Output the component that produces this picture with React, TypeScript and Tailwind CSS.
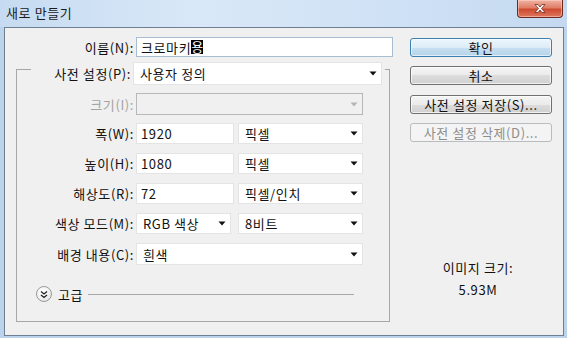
import React from "react";

function Arrow({ disabled }: { disabled?: boolean }) {
  return (
    <svg width="8" height="5" viewBox="0 0 8 5" className="shrink-0">
      <path d="M0.5 0.5H7.5L4 4.5Z" fill={disabled ? "#b4b4b4" : "#111"} />
    </svg>
  );
}

function Combo({
  text,
  w,
  h = "h-[21px]",
  disabled,
}: {
  text?: string;
  w: string;
  h?: string;
  disabled?: boolean;
}) {
  return (
    <div
      className={`${w} ${h} flex items-center justify-between pl-[6px] pr-[4px] ${
        disabled ? "bg-[#f0f0f0] border border-[#b8b8b8]" : "bg-white border border-[#e4e4e4]"
      }`}
    >
      <span className="leading-none">{text}</span>
      <Arrow disabled={disabled} />
    </div>
  );
}

function Input({ text, w }: { text: string; w: string }) {
  return (
    <div className={`${w} h-[21px] flex items-center pl-[4px] bg-white border border-[#e4e4e4]`}>
      <span className="leading-none">{text}</span>
    </div>
  );
}

function Label({ text, w = "w-[119px]", disabled }: { text: string; w?: string; disabled?: boolean }) {
  return (
    <div className={`${w} pr-[2px] flex justify-end items-center ${disabled ? "text-[#a3a3a3]" : ""}`}>
      <span className="leading-none whitespace-nowrap">{text}</span>
    </div>
  );
}

function Btn({
  text,
  kind,
  mt,
}: {
  text: string;
  kind?: "default" | "disabled";
  mt: string;
}) {
  const base = "ml-[17px] w-[142px] h-[19px] rounded-[3px] border flex items-center justify-center";
  const style =
    kind === "default"
      ? "border-[#3c7fb1] bg-[linear-gradient(to_bottom,#edf6fc_0%,#dcecf7_50%,#c8e0f2_50%,#b4d3ea_100%)] shadow-[inset_0_0_0_1px_rgba(255,255,255,0.6)]"
      : kind === "disabled"
      ? "border-[#b9bcbe] bg-[#f4f4f4] text-[#8d8d8d]"
      : "border-[#707070] bg-[linear-gradient(to_bottom,#f4f4f4_0%,#ebebeb_50%,#dddddd_50%,#d0d0d0_100%)] shadow-[inset_0_0_0_1px_rgba(255,255,255,0.7)]";
  return (
    <div className={`${base} ${style} ${mt}`}>
      <span className="leading-none">{text}</span>
    </div>
  );
}

export default function App() {
  return (
    <div className="w-[567px] h-[338px] overflow-hidden bg-[#bcd3ec] font-['Noto_Sans_CJK_KR','Noto_Sans',sans-serif] text-[13px] tracking-[0.6px] text-[#111]">
      {/* title bar */}
      <div className="h-[27px] flex items-start bg-[linear-gradient(to_right,#c6dbf1_0%,#d9e8f8_35%,#cfe1f5_70%,#c4d9f0_100%)]">
        <div className="pl-[6px] pt-[6px] text-[13px] leading-none text-[#1b1b1b]">새로 만들기</div>
        <div className="ml-auto mr-[4px] w-[46px] h-[18px] rounded-b-[4px] border border-t-0 border-[#6e2a20] bg-[linear-gradient(to_bottom,#f0b4a4_0%,#e07d66_45%,#cc4b31_55%,#de765c_100%)] shadow-[inset_0_0_0_1px_rgba(255,220,210,0.5)] flex items-center justify-center">
          <svg width="14" height="11" viewBox="0 0 14 11">
            <path
              d="M2 1.5h3l2 2.5 2-2.5h3l-3.5 4 3.5 4h-3l-2-2.5-2 2.5h-3l3.5-4z"
              fill="#fff"
              stroke="#6b2b22"
              strokeWidth="0.8"
            />
          </svg>
        </div>
      </div>

      {/* client */}
      <div className="ml-[4px] w-[560px] h-[309px] border border-[#6f7f92] bg-[#f0f0f0] flex">
        {/* left column */}
        <div className="w-[388px] flex flex-col">
          <div className="mt-[9px] h-[20px] flex">
            <Label text="이름(N):" w="w-[131px]" />
            <div className="w-[257px] h-[20px] flex items-center pl-[4px] bg-white border border-[#a9bdd2]">
              <span className="leading-none">크로마키</span>
              <span className="leading-[14px] h-[14px] bg-black text-white tracking-normal">용</span>
            </div>
          </div>

          {/* group box */}
          <div className="ml-[11px] mt-[12px] w-[374px] h-[253px] border border-[#a7a7a7] flex flex-col">
            <div className="-mt-[8px] ml-[14px] w-[354px] h-[23px] bg-[#f0f0f0] flex">
              <Label text="사전 설정(P):" w="w-[102px]" />
              <Combo text="사용자 정의" w="w-[249px]" h="h-[23px]" />
            </div>
            <div className="mt-[8px] h-[22px] flex">
              <Label text="크기(I):" disabled />
              <Combo w="w-[227px]" h="h-[22px]" disabled />
            </div>
            <div className="mt-[8px] h-[21px] flex">
              <Label text="폭(W):" />
              <Input text="1920" w="w-[98px]" />
              <div className="ml-[4px]">
                <Combo text="픽셀" w="w-[125px]" />
              </div>
            </div>
            <div className="mt-[9px] h-[21px] flex">
              <Label text="높이(H):" />
              <Input text="1080" w="w-[98px]" />
              <div className="ml-[4px]">
                <Combo text="픽셀" w="w-[125px]" />
              </div>
            </div>
            <div className="mt-[9px] h-[21px] flex">
              <Label text="해상도(R):" />
              <Input text="72" w="w-[98px]" />
              <div className="ml-[4px]">
                <Combo text="픽셀/인치" w="w-[125px]" />
              </div>
            </div>
            <div className="mt-[9px] h-[21px] flex">
              <Label text="색상 모드(M):" />
              <Combo text="RGB 색상" w="w-[95px]" />
              <div className="ml-[7px]">
                <Combo text="8비트" w="w-[125px]" />
              </div>
            </div>
            <div className="mt-[9px] h-[22px] flex">
              <Label text="배경 내용(C):" />
              <Combo text="흰색" w="w-[227px]" h="h-[22px]" />
            </div>
            <div className="mt-[21px] h-[16px] flex items-center">
              <div className="ml-[19px] w-[16px] h-[16px] rounded-full border border-[#9a9a9a] bg-[radial-gradient(circle_at_40%_35%,#ffffff_0%,#f2f2f2_50%,#d6d6d6_100%)] flex items-center justify-center">
                <svg width="8" height="9" viewBox="0 0 8 9">
                  <path d="M1 1.5L4 4L7 1.5M1 5L4 7.5L7 5" fill="none" stroke="#222" strokeWidth="1.3" />
                </svg>
              </div>
              <span className="ml-[6px] leading-none">고급</span>
              <div className="ml-[5px] w-[266px] h-px bg-[#a8a8a8]" />
            </div>
          </div>
        </div>

        {/* right column */}
        <div className="flex-1 flex flex-col">
          <Btn text="확인" kind="default" mt="mt-[10px]" />
          <Btn text="취소" mt="mt-[9px]" />
          <Btn text="사전 설정 저장(S)..." mt="mt-[10px]" />
          <Btn text="사전 설정 삭제(D)..." kind="disabled" mt="mt-[9px]" />
          <div className="mt-[117px] h-[16px] flex items-center justify-center">
            <span className="leading-none">이미지 크기:</span>
          </div>
          <div className="mt-[6px] h-[16px] flex items-center justify-center">
            <span className="leading-none">5.93M</span>
          </div>
        </div>
      </div>
    </div>
  );
}
